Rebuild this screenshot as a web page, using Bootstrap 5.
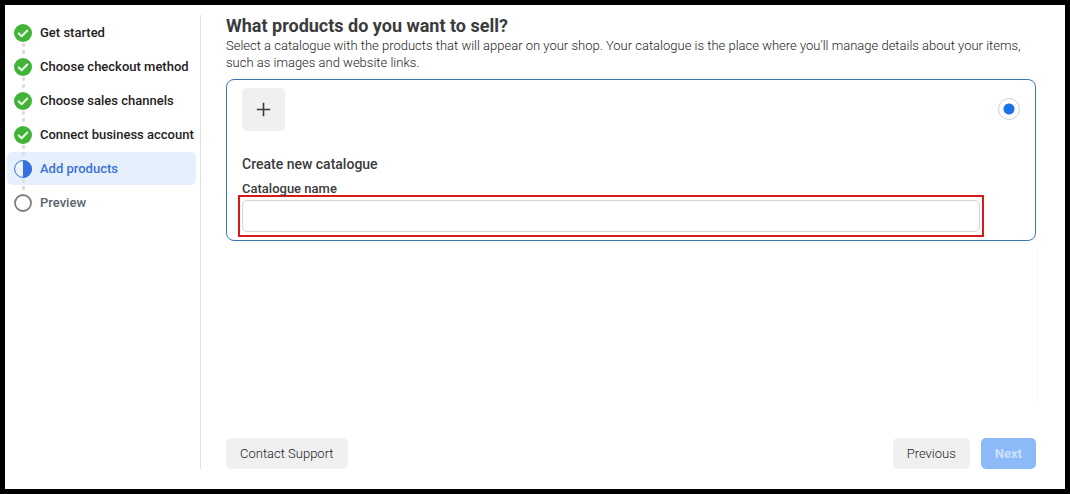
<!DOCTYPE html>
<html lang="en">
<head>
<meta charset="utf-8">
<meta name="viewport" content="width=device-width, initial-scale=1">
<title>Add products</title>
<link href="https://cdn.jsdelivr.net/npm/bootstrap@5.3.0/dist/css/bootstrap.min.css" rel="stylesheet">
<style>
  body { font-family: Roboto, "Liberation Sans", sans-serif; font-size: 13px; line-height: 17px; color: #3a3b3d; background: #fff; }
  .app-frame { border: 5px solid #000; }
  .steps-pane { width: 196px; margin: 10px 0 20px; padding: 1px 4px 0 2px; border-right: 1px solid #dfe0e2; }
  .step { position: relative; margin-bottom: 1px; }
  .step-link { height: 33px; padding-left: 7px; gap: 8px; border-radius: 5px; color: #1f2123; font-weight: 500; text-decoration: none; }
  .step-link svg { width: 18px; height: 18px; flex: none; }
  .step-link.current { background: #e6f0fc; color: #3b70d6; }
  .step-link.upcoming { color: #5c6570; }
  /* two dots joining one step to the next */
  .step:not(:last-child)::after { content: ""; position: absolute; left: 15px; top: 27px; width: 3px; height: 4px; border-radius: 1px; background: #dcdee1; box-shadow: 0 7px #dcdee1; z-index: 1; }
  .main-pane { padding: 10px 29px 20px 25px; }
  .page-title { font-size: 18px; line-height: 22px; font-weight: 700; }
  .intro { font-weight: 300; color: #1c1d1f; }
  .option-card { border: 1px solid #3a78b4; border-radius: 8px; margin-top: 8px; padding: 8px 15px 3px; }
  .plus-tile { width: 43px; height: 43px; border-radius: 5px; background: #f0f0f0; }
  .option-card .form-check-input { width: 22px; height: 22px; margin: 10px 0 0; border: 1px solid #cfd1d4; background: #fff; box-shadow: none; }
  .option-card .form-check-input:checked { background: radial-gradient(circle, #1a73e8 5px, #fff 6px); }
  .option-title { font-size: 14px; line-height: 18px; font-weight: 500; margin-top: 24px; }
  .name-label { font-weight: 500; line-height: 16px; margin-top: 8px; }
  .name-highlight { border: 2px solid #d91a1a; padding: 3px 2px; margin: -2px 36px 0 -4px; }
  .name-highlight .form-control { height: 32px; border: 1px solid #d3d4d6; border-radius: 5px; font-size: 13px; }
  .scroll-edge { border-right: 1px solid #f6fafc; margin: 0 -2px 31px 0; }
  .footer-bar { gap: 11px; }
  .action-btn { height: 31px; padding: 0 14px; border: 0; border-radius: 5px; background: #f0f0f0; color: #1c1d1f; font-size: 13px; line-height: 17px; font-weight: 300; }
  .action-btn.next, .action-btn.next:disabled { background: #8cbaf9; color: #cbe0fd; font-weight: 700; opacity: 1; }
</style>
</head>
<body>
<div class="app-frame d-flex min-vh-100">
  <nav class="steps-pane flex-shrink-0" aria-label="Setup steps">
    <svg class="d-none" aria-hidden="true">
      <symbol id="step-done" viewBox="0 0 18 18">
        <circle cx="9" cy="9" r="9" fill="#42b338"/>
        <path d="M4.7 9.4 7.7 12.2 13.3 6.5" fill="none" stroke="#e9fbe5" stroke-width="2" stroke-linecap="round" stroke-linejoin="round"/>
      </symbol>
    </svg>
    <ol class="list-unstyled m-0">
      <li class="step"><a href="#" class="step-link d-flex align-items-center"><svg aria-hidden="true"><use href="#step-done"/></svg>Get started</a></li>
      <li class="step"><a href="#" class="step-link d-flex align-items-center"><svg aria-hidden="true"><use href="#step-done"/></svg>Choose checkout method</a></li>
      <li class="step"><a href="#" class="step-link d-flex align-items-center"><svg aria-hidden="true"><use href="#step-done"/></svg>Choose sales channels</a></li>
      <li class="step"><a href="#" class="step-link d-flex align-items-center"><svg aria-hidden="true"><use href="#step-done"/></svg>Connect business account</a></li>
      <li class="step"><a href="#" class="step-link current d-flex align-items-center" aria-current="step"><svg viewBox="0 0 18 18" aria-hidden="true"><circle cx="9" cy="9" r="8.4" fill="#edf4fd" stroke="#3b70d6" stroke-width="1"/><path d="M9 0a9 9 0 0 1 0 18z" fill="#3572e0"/></svg>Add products</a></li>
      <li class="step"><a href="#" class="step-link upcoming d-flex align-items-center"><svg viewBox="0 0 18 18" aria-hidden="true"><circle cx="9" cy="9" r="8" fill="#fff" stroke="#7b7e84" stroke-width="1.8"/></svg>Preview</a></li>
    </ol>
  </nav>

  <main class="main-pane d-flex flex-column flex-grow-1">
    <h1 class="page-title m-0">What products do you want to sell?</h1>
    <p class="intro m-0">Select a catalogue with the products that will appear on your shop. Your catalogue is the place where you'll manage details about your items, such as images and website links.</p>

    <section class="option-card">
      <div class="d-flex justify-content-between align-items-start">
        <div class="plus-tile d-flex align-items-center justify-content-center">
          <svg width="15" height="15" viewBox="0 0 15 15" aria-hidden="true"><path d="M7.5 .8v13.4M.8 7.5h13.4" stroke="#3a3b3d" stroke-width="1.6"/></svg>
        </div>
        <input class="form-check-input" type="radio" name="catalogue" id="new-catalogue" aria-labelledby="option-title" checked>
      </div>
      <h2 class="option-title mb-0" id="option-title">Create new catalogue</h2>
      <label class="name-label d-block" for="catalogue-name">Catalogue name</label>
      <div class="name-highlight"><input class="form-control" type="text" id="catalogue-name"></div>
    </section>

    <div class="scroll-edge flex-grow-1"></div>

    <footer class="footer-bar d-flex align-items-center">
      <button type="button" class="btn action-btn me-auto">Contact Support</button>
      <button type="button" class="btn action-btn">Previous</button>
      <button type="button" class="btn action-btn next" disabled>Next</button>
    </footer>
  </main>
</div>
<script src="https://cdn.jsdelivr.net/npm/bootstrap@5.3.0/dist/js/bootstrap.bundle.min.js"></script>
</body>
</html>
